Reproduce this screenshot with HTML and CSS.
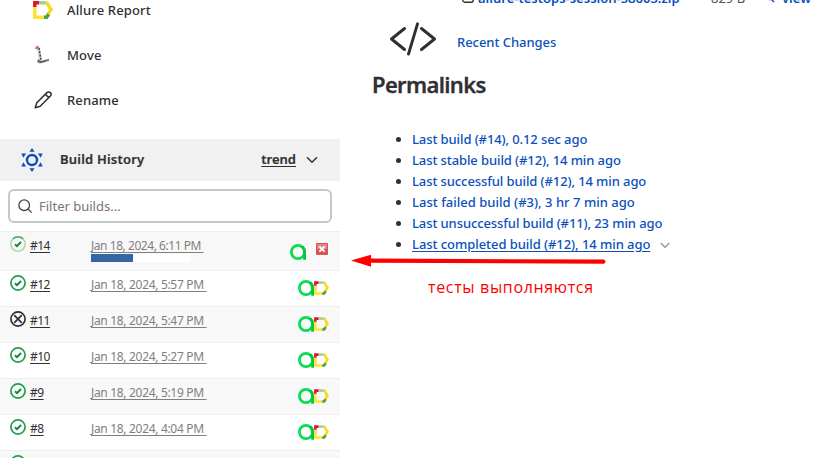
FILE: index.html
```html
<!DOCTYPE html>
<html lang="en">
<head>
<meta charset="utf-8">
<title>Build History</title>
<link rel="stylesheet" href="styles.css">
</head>
<body>
<svg class="defs" aria-hidden="true">
  <symbol id="ok" viewBox="0 0 16 16"><circle cx="8" cy="8" r="7.1" fill="none" stroke="#1e9e4a" stroke-width="1.7"/><path d="M5 8.3l2 1.9 4-4.2" fill="none" stroke="#16883c" stroke-width="2"/></symbol>
  <symbol id="running" viewBox="0 0 16 16"><circle cx="8" cy="8" r="7.2" fill="none" stroke="#a9dab8" stroke-width="1.6"/><path d="M3 2.8A7.2 7.2 0 0 1 13 2.8" fill="none" stroke="#4cae6a" stroke-width="1.6"/><path d="M5 8.3l2 1.9 4-4.2" fill="none" stroke="#16883c" stroke-width="2"/></symbol>
  <symbol id="aborted" viewBox="0 0 16 16"><g fill="none" stroke="#303033" stroke-width="1.7"><circle cx="8" cy="8" r="7.1"/><path d="M4.2 4.2l7.6 7.6M11.8 4.2l-7.6 7.6"/></g></symbol>
  <symbol id="testops" viewBox="0 0 16 16"><circle cx="8" cy="8" r="6.6" fill="none" stroke="#0bdc52" stroke-width="2.8"/><path d="M14.6 15.8V8A6.6 6.6 0 0 0 12 2.7" fill="none" stroke="#08c446" stroke-width="2.8"/></symbol>
  <symbol id="allure" viewBox="0 0 20 18"><g fill="none" stroke-width="3.4"><path d="M6 1.8h7" stroke="#9bcf9e"/><path d="M1.8 6v10.2h10" stroke="#ffe32c"/><path d="M13 1.8l1 .2 4 6.6-3.4 5" stroke="#fad91b"/><path d="M1.8 6V1.8H6" stroke="#e1122d"/><path d="M11 16.2h2.6l2-3" stroke="#45a24a"/></g></symbol>
</svg>
<div class="page">
  <aside class="side">
    <nav class="tasks">
      <a class="task"><svg width="20" height="18"><use href="#allure"/></svg><span>Allure Report</span></a>
      <a class="task"><svg width="20" height="20" viewBox="0 0 20 20"><path d="M5.5 3l2 12.5" stroke="#ccc" stroke-width="3"/><path d="M6 3l2 12" stroke="#333" stroke-width="1.3" stroke-dasharray="2 1.3"/><path d="M2 3.2l4-1.4M4 1v3.2" stroke="#df5367" stroke-width="1.3"/><path d="M4.5 14.5l4 1.5 7.5-2.5v2.5L7 18.5l-2.8-1z" fill="#858585"/><path d="M5 15l3 2 5-1.5" stroke="#444" fill="none"/></svg><span>Move</span></a>
      <a class="task"><svg width="20" height="20" viewBox="0 0 20 20"><path d="M2.2 17.8L3.8 12.8 14 2.6a2.4 2.4 0 0 1 3.4 3.4L7.2 16.2zM12.4 4.2l3.4 3.4" fill="none" stroke="#303033" stroke-width="1.5" stroke-linejoin="round"/></svg><span>Rename</span></a>
    </nav>
    <header class="history-head">
      <svg class="sun" width="22" height="24" viewBox="0 0 22 24"><circle cx="11" cy="12" r="5" fill="none" stroke="#0d51c1" stroke-width="2.4"/><path d="M11 0l2.6 3.7H8.4zM11 24l2.6-3.7H8.4zM.3 5.4l4.8.2-2.8 4.2zM21.7 5.4l-4.8.2 2.8 4.2zM.3 18.6l4.8-.2-2.8-4.2zM21.7 18.6l-4.8-.2 2.8-4.2z" fill="#0d51c1"/></svg>
      <b class="history-title">Build History</b>
      <a class="trend">trend</a>
      <svg class="chev" width="12" height="8" viewBox="0 0 12 8"><path d="M1 1.2l5 5 5-5" fill="none" stroke="#303033" stroke-width="1.4"/></svg>
    </header>
    <div class="filter">
      <svg width="15" height="15" viewBox="0 0 15 15"><g fill="none" stroke="#444" stroke-width="1.3"><circle cx="6.2" cy="6.2" r="5.3"/><path d="M10 10l3.6 3.6"/></g></svg>
      <span>Filter builds...</span>
    </div>
    <div class="builds">
      <div class="build odd running"><svg class="status"><use href="#running"/></svg><a class="num">#14</a><div class="when"><a class="date">Jan 18, 2024, 6:11 PM&nbsp;</a><div class="bar"><i></i></div></div><div class="badges"><svg width="16" height="16"><use href="#testops"/></svg><svg class="stop" width="12" height="12" viewBox="0 0 12 12"><rect width="12" height="12" rx="1" fill="#d95456"/><rect x="1" y="1" width="10" height="5" fill="#e58284"/><path d="M3.4 3.4l5.2 5.2M8.6 3.4l-5.2 5.2" stroke="#fff" stroke-width="1.8"/></svg></div></div>
      <div class="build"><svg class="status"><use href="#ok"/></svg><a class="num">#12</a><div class="when"><a class="date">Jan 18, 2024, 5:57 PM&nbsp;</a></div><div class="badges"><svg width="16" height="16"><use href="#testops"/></svg><svg width="15" height="14"><use href="#allure"/></svg></div></div>
      <div class="build odd"><svg class="status"><use href="#aborted"/></svg><a class="num">#11</a><div class="when"><a class="date">Jan 18, 2024, 5:47 PM&nbsp;</a></div><div class="badges"><svg width="16" height="16"><use href="#testops"/></svg><svg width="15" height="14"><use href="#allure"/></svg></div></div>
      <div class="build"><svg class="status"><use href="#ok"/></svg><a class="num">#10</a><div class="when"><a class="date">Jan 18, 2024, 5:27 PM&nbsp;</a></div><div class="badges"><svg width="16" height="16"><use href="#testops"/></svg><svg width="15" height="14"><use href="#allure"/></svg></div></div>
      <div class="build odd"><svg class="status"><use href="#ok"/></svg><a class="num">#9</a><div class="when"><a class="date">Jan 18, 2024, 5:19 PM&nbsp;</a></div><div class="badges"><svg width="16" height="16"><use href="#testops"/></svg><svg width="15" height="14"><use href="#allure"/></svg></div></div>
      <div class="build"><svg class="status"><use href="#ok"/></svg><a class="num">#8</a><div class="when"><a class="date">Jan 18, 2024, 4:04 PM&nbsp;</a></div><div class="badges"><svg width="16" height="16"><use href="#testops"/></svg><svg width="15" height="14"><use href="#allure"/></svg></div></div>
      <div class="build odd"><svg class="status"><use href="#ok"/></svg></div>
    </div>
  </aside>
  <main class="main">
    <div class="artifact">
      <svg class="file" width="12" height="14" viewBox="0 0 12 14"><rect x=".8" y=".8" width="10.4" height="12.4" rx="2" fill="none" stroke="#303033" stroke-width="1.4"/></svg>
      <a class="zip">allure-testops-session-58605.zip</a>
      <span class="size">829 B</span>
      <svg class="mag" width="9" height="10" viewBox="0 0 9 10"><path d="M1 5l3 2M5 6l3 3" stroke="#0b50bd" stroke-width="1.5"/></svg>
      <a class="view">view</a>
    </div>
    <div class="changes">
      <svg width="46" height="34" viewBox="0 0 46 34"><path d="M14.5 6.5L1.5 17l13 10.5M31.5 6.5l13 10.5-13 10.5M27.5 1.8L18.5 32" fill="none" stroke="#303033" stroke-width="2.9" stroke-linecap="round" stroke-linejoin="round"/></svg>
      <a>Recent Changes</a>
    </div>
    <h2>Permalinks</h2>
    <ul class="links">
      <li><a>Last build (#14), 0.12 sec ago</a></li>
      <li><a>Last stable build (#12), 14 min ago</a></li>
      <li><a>Last successful build (#12), 14 min ago</a></li>
      <li><a class="failed">Last failed build (#3), 3 hr 7 min ago</a></li>
      <li><a>Last unsuccessful build (#11), 23 min ago</a></li>
      <li><a class="hover">Last completed build (#12), 14 min ago</a><svg class="more" width="10" height="7" viewBox="0 0 10 7"><path d="M.7 1l4.3 4.3L9.3 1" fill="none" stroke="#999" stroke-width="1.4"/></svg></li>
    </ul>
  </main>
</div>
<svg class="arrow" width="256" height="14" viewBox="0 0 256 14"><path d="M0 6.5L20 .8v3.7L253 5.6q3 2 0 4.2L20 8.7V12.7z" fill="#fe0000"/></svg>
<div class="note" lang="ru">тесты выполняются</div>
</body>
</html>
```
FILE: styles.css
```css
* { box-sizing: border-box; }
body { margin: 0; width: 829px; height: 458px; overflow: hidden; position: relative; background: #fff; color: #303033; font: 500 13px/20px "Noto Sans", "Open Sans", sans-serif; }
svg { display: block; flex: none; }
.defs { position: absolute; width: 0; height: 0; }
.page { display: grid; grid-template-columns: 340px 1fr; height: 458px; }
.side { overflow: hidden; height: 458px; }
.tasks { height: 139px; overflow: hidden; display: flex; flex-direction: column; justify-content: flex-end; padding-bottom: 17px; }
.task { display: flex; align-items: center; height: 45px; flex: none; padding-left: 33px; gap: 14px; }
.task span { letter-spacing: .15px; }
.history-head { height: 42px; background: #f1f1f1; display: flex; align-items: center; padding: 0 22px 0 21px; font-weight: 600; -webkit-text-stroke: .2px; }
.history-title { margin: -2px 0 0 17px; letter-spacing: .2px; font-weight: 600; }
.trend { margin: -2px 0 0 auto; text-decoration: underline; text-underline-offset: 2px; }
.chev { margin-left: 10px; }
.filter { margin: 8px; height: 34px; border: 2px solid #c0cace; border-radius: 6px; display: flex; align-items: center; gap: 6px; padding-left: 8px; color: #757575; font-weight: 400; }
.build { display: flex; height: 36px; border-top: 1px solid #efefef; padding: 5px 11px 0 10px; }
.build.running { height: 39px; }
.odd { background: #f8f8f8; }
.status { width: 16px; height: 16px; margin-top: -1px; }
.num { margin-left: 4px; width: 61px; font-size: 12px; line-height: 18px; font-weight: 400; text-decoration: underline; text-underline-offset: 2px; letter-spacing: -.5px; }
.when { width: 130px; }
.date { display: block; font-size: 12px; line-height: 18px; font-weight: 400; color: #808080; text-decoration: underline; text-underline-offset: 2px; letter-spacing: -.32px; white-space: nowrap; }
.running .date { letter-spacing: -.45px; }
.bar { width: 100px; height: 8px; margin-top: -1px; background: #fff; }
.bar i { display: block; width: 42px; height: 8px; background: #3465a4; }
.badges { margin-left: auto; display: flex; align-items: center; height: 16px; margin-top: 4px; }
.running .badges { margin-top: 7px; }
.stop { margin: -7px 1px 0 10px; }
.main { padding-left: 32px; overflow: hidden; height: 458px; }
.artifact { display: flex; height: 8px; margin-left: 90px; align-items: flex-end; color: #0b50bd; font-weight: 600; }
.artifact svg { margin-bottom: 5px; }
.zip { margin-left: 4px; width: 233px; white-space: nowrap; }
.size { color: #505050; font-weight: 400; width: 55px; }
.view { margin-left: 7px; }
.changes { display: flex; align-items: center; gap: 21px; height: 34px; margin: 14px 0 0 18px; color: #0b50bd; letter-spacing: -.05px; }
.changes a { padding-top: 5px; }
h2 { margin: 13px 0 0; font-size: 22px; line-height: 30px; font-weight: 600; letter-spacing: -.65px; -webkit-text-stroke: .3px; }
.links { margin: 30px 0 0; padding: 0 0 0 40px; color: #303033; }
.links li { height: 21px; line-height: 21px; }
.links a { color: #0b50bd; letter-spacing: -.1px; }
.links .failed { letter-spacing: .02px; }
.links .hover { letter-spacing: -.06px; text-decoration: underline; text-underline-offset: 2px; }
.more { display: inline-block; margin-left: 10px; }
.arrow { position: absolute; left: 351px; top: 254px; }
.note { position: absolute; left: 428px; top: 276px; color: #fe0000; font: 400 16px/22px "Open Sans", sans-serif; letter-spacing: .65px; white-space: nowrap; }
```
